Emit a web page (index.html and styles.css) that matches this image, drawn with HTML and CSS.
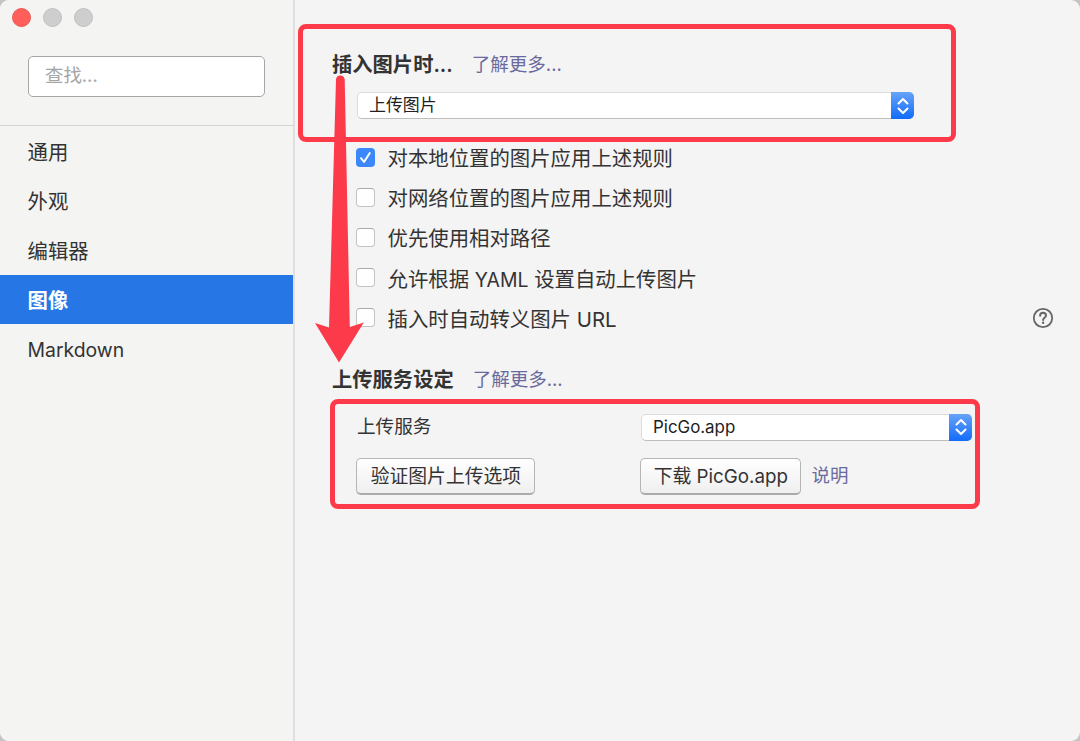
FILE: index.html
```html
<!DOCTYPE html>
<html lang="zh-CN">

<head>
    <meta charset="UTF-8">
    <meta name="viewport" content="width=device-width, initial-scale=1.0">
    <title>偏好设置</title>
    <link rel="stylesheet" href="styles.css">
</head>

<body>
    <div class="window">
        <div class="sidebar">
            <div class="dots">
                <span class="dot close"></span>
                <span class="dot"></span>
                <span class="dot"></span>
            </div>
            <div class="search-box">
                <input type="text" class="search" placeholder="查找...">
            </div>
            <ul class="menu">
                <li>通用</li>
                <li>外观</li>
                <li>编辑器</li>
                <li class="active">图像</li>
                <li><span class="en">Markdown</span></li>
            </ul>
        </div>
        <div class="content">
            <div class="title">
                <h2>插入图片时...</h2>
                <a class="link">了解更多...</a>
            </div>
            <div class="select select-insert">
                <span class="value">上传图片</span>
                <span class="arrows">
                    <svg width="12" height="18" viewBox="0 0 12 18"><path d="M1.5 6.5L6 2l4.5 4.5M1.5 11.5L6 16l4.5-4.5"/></svg>
                </span>
            </div>
            <div class="rules">
                <label><span class="check checked"><svg width="19" height="19" viewBox="0 0 19 19"><path d="M5 10.2L8 14 13.8 5"/></svg></span>对本地位置的图片应用上述规则</label>
                <label><span class="check"></span>对网络位置的图片应用上述规则</label>
                <label><span class="check"></span>优先使用相对路径</label>
                <label><span class="check"></span><span>允许根据 <span class="en">YAML</span> 设置自动上传图片</span></label>
                <label><span class="check"></span><span>插入时自动转义图片 URL</span>
                    <svg class="help" width="22" height="22" viewBox="0 0 22 22"><circle cx="11" cy="11" r="9.2"/><path d="M8.1 8.7c0-3.9 5.9-3.7 5.9-.2 0 2.3-2.9 2.2-2.9 4.5"/><circle class="point" cx="11.1" cy="15.7" r="1.2"/></svg>
                </label>
            </div>
            <div class="title title-upload">
                <h2>上传服务设定</h2>
                <a class="link">了解更多...</a>
            </div>
            <div class="service">
                <span class="name">上传服务</span>
                <div class="select">
                    <span class="value">PicGo.app</span>
                    <span class="arrows">
                        <svg width="12" height="18" viewBox="0 0 12 18"><path d="M1.5 6.5L6 2l4.5 4.5M1.5 11.5L6 16l4.5-4.5"/></svg>
                    </span>
                </div>
            </div>
            <div class="service service-btns">
                <div class="name"><button class="verify">验证图片上传选项</button></div>
                <button class="download">下载 PicGo.app</button>
                <a class="link explain">说明</a>
            </div>
        </div>
    </div>

    <!-- 标注：两个红框和箭头 -->
    <div class="mark mark-top"></div>
    <div class="mark mark-bottom"></div>
    <svg class="mark-arrow" width="52" height="290" viewBox="0 0 52 290">
        <path d="M21 5.500Q21.500 1.500 25.300 1.500t4.400 4L34.800 253l14-4.500L24 288.500 0 249l14 4.500z"/>
    </svg>
</body>

</html>
```

FILE: styles.css
```css
* {
    box-sizing: border-box;
}

body {
    margin: 0;
    background: #c4c4c4;
    color: #333;
    font-family: Inter, "Noto Sans CJK SC", sans-serif;
    font-size: 20.4px;
}

.window {
    display: flex;
    height: 741px;
    border-radius: 9px;
    background: #f4f4f4;
    overflow: hidden;
}

/* 左侧 */
.sidebar {
    width: 295px;
    border-right: 2px solid #dfdfdf;
    background: #f4f4f2;
}

.dots {
    display: flex;
    gap: 12px;
    padding: 7.5px 12px 0;
}

.dot {
    width: 19px;
    height: 19px;
    border: 1px solid #bfbfbf;
    border-radius: 50%;
    background: #cecece;
}

.close {
    border-color: #ed5550;
    background: #ff5f5a;
}

.search-box {
    height: 99.5px;
    padding: 29px 28px 0;
    border-bottom: 1px solid #d4d4d4;
}

.search {
    display: block;
    width: 237px;
    height: 41.5px;
    padding: 0 16px 3px;
    border: 1px solid #a6a6a6;
    border-radius: 5px;
    background: #fff;
    font-family: inherit;
    font-size: 18.4px;
    outline: none;
}

.search::placeholder {
    color: #a5a5a5;
}

.menu {
    margin: 0;
    padding: 1px 0 0;
    list-style: none;
}

.menu li {
    height: 49.3px;
    padding-left: 27.5px;
    line-height: 51.5px;
}

.menu .active {
    background: #2676e5;
    color: #fff;
    font-weight: 600;
}

.en {
    font-size: 19.4px;
}

/* 右侧 */
.content {
    flex: 1;
    padding: 48px 26px 0 37px;
}

.title {
    display: flex;
    align-items: center;
    height: 30px;
}

h2 {
    margin: 0;
    font-size: 20.3px;
    font-weight: 600;
}

.link {
    margin-left: 19px;
    color: #6a6a9e;
    font-size: 18.5px;
}

.select {
    display: flex;
    width: 331px;
    height: 27px;
    border: 1px solid #dcdcdc;
    border-bottom-color: #bdbdbd;
    border-radius: 5px;
    background: #fff;
    color: #222;
    font-size: 16.9px;
    line-height: 25px;
}

.select-insert {
    width: 557px;
    margin: 14px 0 0 25px;
}

.value {
    flex: 1;
    padding-left: 11px;
}

.arrows {
    display: flex;
    align-items: center;
    justify-content: center;
    width: 23px;
    height: 27px;
    margin: -1px;
    border-radius: 0 5px 5px 0;
    background: linear-gradient(#66a3f8, #116bfb);
}

svg path {
    fill: none;
    stroke: #fff;
    stroke-width: 2;
    stroke-linecap: round;
    stroke-linejoin: round;
}

.rules {
    margin: 18px 0 0 24px;
}

.rules label {
    display: flex;
    align-items: center;
    height: 40.2px;
}

.check {
    width: 19px;
    height: 19px;
    margin-right: 12.5px;
    border: 1px solid #c3c3c3;
    border-top-color: #a9a9a9;
    border-radius: 4px;
    background: #fff;
}

.checked {
    border: 0;
    background: #3b88fc;
}

.checked svg {
    display: block;
}

.help {
    margin-left: auto;
}

.help circle {
    fill: none;
    stroke: #666;
    stroke-width: 1.8;
}

.help path {
    stroke: #666;
}

.help .point {
    fill: #666;
    stroke: none;
}

.title-upload {
    margin-top: 25px;
}

.service {
    display: flex;
    align-items: center;
    margin: 21px 0 0 25px;
}

.name {
    width: 284px;
    padding-bottom: 2px;
    font-size: 18.6px;
    line-height: 25px;
}

.service-btns {
    align-items: flex-start;
    margin-top: 17px;
    margin-left: 24.4px;
}

button {
    height: 37px;
    padding: 0 0 2px;
    border: 1px solid #b5b5b5;
    border-bottom: 2px solid #aaa;
    border-radius: 5px;
    background: linear-gradient(#fff, #efefef);
    color: #333;
    font-family: inherit;
    font-size: 18.8px;
}

.verify {
    display: block;
    width: 179px;
}

.download {
    width: 161px;
}

.explain {
    margin-left: 10px;
    line-height: 34px;
}

/* 红色标注 */
.mark {
    position: absolute;
    border: 5px solid #fd3a49;
    border-radius: 8px;
}

.mark-top {
    left: 298px;
    top: 24px;
    width: 658px;
    height: 118px;
}

.mark-bottom {
    left: 330px;
    top: 399px;
    width: 650px;
    height: 110px;
}

.mark-arrow {
    position: absolute;
    left: 315px;
    top: 74px;
}

.mark-arrow path {
    fill: #fd3a49;
    stroke: none;
}
```
